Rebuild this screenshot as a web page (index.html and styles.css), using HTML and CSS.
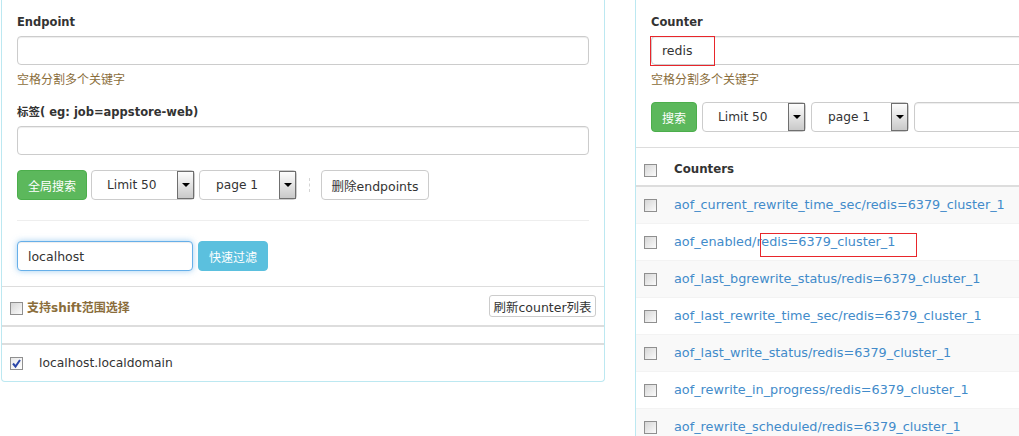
FILE: index.html
```html
<!DOCTYPE html>
<html lang="zh-CN">
<head>
    <meta charset="UTF-8">
    <title>Endpoint / Counter</title>
    <link rel="stylesheet" href="styles.css">
</head>
<body>
<div class="page">
    <!-- endpoint 面板 -->
    <div class="panel">
        <div class="panel-body">
            <div class="form-group">
                <label>Endpoint</label>
                <input class="form-control" type="text">
                <span class="help">空格分割多个关键字</span>
            </div>
            <div class="form-group">
                <label>标签( eg: job=appstore-web)</label>
                <input class="form-control" type="text">
            </div>
            <div class="btn-row">
                <button class="btn btn-green btn-wide">全局搜索</button>
                <div class="select sel-limit"><span>Limit 50</span><i class="arrow"></i></div>
                <div class="select sel-page"><span>page 1</span><i class="arrow"></i></div>
                <span class="sep"></span>
                <button class="btn btn-default">删除endpoints</button>
            </div>
            <hr>
            <div class="btn-row">
                <input class="form-control filter focus" type="text" value="localhost">
                <button class="btn btn-info btn-wide">快速过滤</button>
            </div>
        </div>
        <div class="bar">
            <span class="shift"><i class="cb"></i>支持shift范围选择</span>
            <button class="btn btn-sm">刷新counter列表</button>
        </div>
        <div class="list-head"></div>
        <div class="list-row">
            <i class="cb checked"><svg width="11" height="11" viewBox="0 0 11 11"><path d="M2 5.5 L4.5 8.5 L9 2" fill="none" stroke="#2b46a8" stroke-width="2"/></svg></i>
            <span class="host">localhost.localdomain</span>
        </div>
    </div>

    <!-- counter 面板 -->
    <div class="panel panel-right">
        <div class="panel-body">
            <div class="form-group">
                <label>Counter</label>
                <div class="input-wrap">
                    <input class="form-control" type="text" value="redis">
                    <span class="mark mark-input"></span>
                </div>
                <span class="help">空格分割多个关键字</span>
            </div>
            <div class="btn-row gap5">
                <button class="btn btn-green btn-search">搜索</button>
                <div class="select sel-limit"><span>Limit 50</span><i class="arrow"></i></div>
                <div class="select sel-page"><span>page 1</span><i class="arrow"></i></div>
                <input class="form-control grow" type="text">
            </div>
        </div>
        <table class="counters">
            <thead>
                <tr><th class="check"><i class="cb"></i></th><th>Counters</th></tr>
            </thead>
            <tbody>
                <tr><td class="check"><i class="cb"></i></td><td><a href="#">aof_current_rewrite_time_sec/redis=6379_cluster_1</a></td></tr>
                <tr><td class="check"><i class="cb"></i></td><td><span class="link-wrap"><a href="#">aof_enabled/redis=6379_cluster_1</a><span class="mark mark-row"></span></span></td></tr>
                <tr><td class="check"><i class="cb"></i></td><td><a href="#">aof_last_bgrewrite_status/redis=6379_cluster_1</a></td></tr>
                <tr><td class="check"><i class="cb"></i></td><td><a href="#">aof_last_rewrite_time_sec/redis=6379_cluster_1</a></td></tr>
                <tr><td class="check"><i class="cb"></i></td><td><a href="#">aof_last_write_status/redis=6379_cluster_1</a></td></tr>
                <tr><td class="check"><i class="cb"></i></td><td><a href="#">aof_rewrite_in_progress/redis=6379_cluster_1</a></td></tr>
                <tr><td class="check"><i class="cb"></i></td><td><a href="#">aof_rewrite_scheduled/redis=6379_cluster_1</a></td></tr>
            </tbody>
        </table>
    </div>
</div>
</body>
</html>
```

FILE: styles.css
```css
html, body { overflow: hidden; }
body {
    margin: 0;
    font-family: "DejaVu Sans", "Noto Sans CJK SC", sans-serif;
    font-size: 12.5px;
    color: #333;
}
.page { display: flex; align-items: flex-start; gap: 30px; padding-left: 1px; width: 1300px; }

.panel {
    flex: none;
    width: 604px;
    box-sizing: border-box;
    border: 1px solid #bce8f1;
    border-top: 0;
    border-radius: 0 0 4px 4px;
}
.panel-right { height: 520px; }
.panel-body { padding: 12px 15px 15px; }

.form-group { margin-bottom: 15px; }
label {
    display: block;
    font-weight: bold;
    font-size: 11.5px;
    line-height: 20px;
    margin-bottom: 4px;
}
.form-control {
    display: block;
    width: 100%;
    height: 29px;
    box-sizing: border-box;
    padding: 0 10px;
    border: 1px solid #ccc;
    border-radius: 4px;
    box-shadow: inset 0 1px 1px rgba(0,0,0,.075);
    font: inherit;
    color: #333;
    background: #fff;
}
.form-control.focus {
    border-color: #66afe9;
    box-shadow: inset 0 1px 1px rgba(0,0,0,.075), 0 0 6px rgba(102,175,233,.6);
}
.help {
    display: block;
    margin-top: 7px;
    font-size: 12px;
    line-height: 16px;
    color: #8a6d3b;
}
.form-group:first-child { margin-bottom: 14px; }
.input-wrap { position: relative; }

.btn-row { display: flex; align-items: center; gap: 4px; }
.btn-row.gap5 { gap: 5px; }
.btn-row > * { flex: none; }
.btn-row > .grow { flex: 1; width: auto; height: 30px; }
.btn {
    height: 30px;
    box-sizing: border-box;
    padding: 0 11px;
    border: 1px solid #ccc;
    border-radius: 4px;
    font-family: inherit;
    font-size: 12px;
    color: #333;
    background: #fff;
}
.btn-wide { width: 70px; padding: 0; }
.btn-default { width: 108px; padding: 0; font-size: 12.5px; }
.btn-green { background: #5cb85c; border-color: #4cae4c; color: #fff; }
.btn-search { width: 46px; padding: 0; }
.btn-info { background: #5bc0de; border-color: #5bc0de; color: #fff; margin-left: 1px; }
.btn-sm { height: 22px; width: 107px; padding: 0; border-radius: 3px; font-size: 12.5px; }

.select {
    display: flex;
    align-items: center;
    height: 30px;
    box-sizing: border-box;
    padding-left: 15px;
    border: 1px solid #ccc;
    border-radius: 4px;
    background: #fff;
    font-size: 12.2px;
}
.select span { flex: 1; }
.sel-limit { width: 104px; }
.sel-page { width: 98px; padding-left: 16px; }
.select .arrow {
    align-self: stretch;
    width: 15px;
    border: 1px solid #6f6f6f;
    background: linear-gradient(#fdfdfd, #c9c9c9);
    position: relative;
}
.select .arrow::after {
    content: "";
    position: absolute;
    left: 4px;
    top: 11px;
    border-left: 4px solid transparent;
    border-right: 4px solid transparent;
    border-top: 4px solid #000;
}
.sep {
    height: 14px;
    border-left: 1px dashed #d5d5d5;
    margin: 0 7px 0 8px;
}
.filter { width: 176px; height: 30px; }

hr { border: 0; border-top: 1px solid #eee; margin: 20px 0; }

.cb {
    display: inline-block;
    width: 13px;
    height: 13px;
    box-sizing: border-box;
    border: 1px solid #8f8f8f;
    background: linear-gradient(135deg, #d6d6d6, #fbfbfb);
    vertical-align: middle;
}
.cb svg { display: block; }
.cb.checked { background: linear-gradient(135deg, #e8e8e8, #fff); }

.bar {
    display: flex;
    align-items: center;
    justify-content: space-between;
    padding: 8px;
    border-top: 1px solid #ddd;
    height: 22px;
}
.shift { font-weight: bold; font-size: 12px; color: #8a6d3b; }
.shift .cb { margin-right: 4px; }

.list-head { height: 16px; border-top: 2px solid #ddd; border-bottom: 2px solid #ddd; }
.list-row { display: flex; align-items: center; gap: 16px; padding: 8px 8px 8px; line-height: 20px; }
.host { font-size: 12.3px; }

.counters { width: 100%; border-collapse: collapse; border-top: 1px solid #ddd; }
.counters th, .counters td { padding: 8px; line-height: 20px; text-align: left; }
.counters th { border-bottom: 2px solid #ddd; font-size: 11.8px; padding-top: 10px; padding-bottom: 5px; }
.counters td { border-top: 1px solid #f3f3f3; white-space: nowrap; }
.counters .check { width: 14px; }
.counters th.check { vertical-align: top; padding-top: 12px; }
.counters tbody tr:nth-child(odd) { background: #f9f9f9; }
.counters a { color: #428bca; text-decoration: none; font-size: 12.8px; }
.link-wrap { position: relative; display: inline-block; }

.mark { position: absolute; border: 1px solid #e8262b; }
.mark-input { left: -1px; top: 0; width: 63px; height: 28px; }
.mark-row { left: 86px; top: 1px; width: 155px; height: 22px; }
```
